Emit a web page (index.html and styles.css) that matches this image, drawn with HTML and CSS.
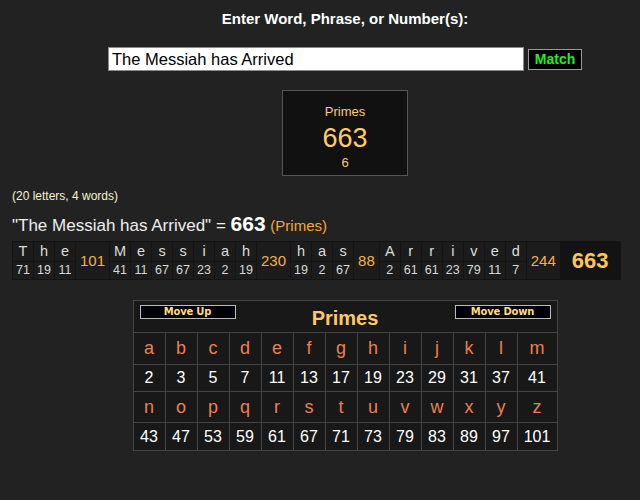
FILE: index.html
```html
<!DOCTYPE html>
<html>
<head>
<meta charset="utf-8">
<link rel="stylesheet" href="styles.css">
</head>
<body>
<div class="top">
  <div class="prompt">Enter Word, Phrase, or Number(s):</div>
  <div class="entry">
    <input class="field" type="text" value="The Messiah has Arrived">
    <button class="match">Match</button>
  </div>
  <div class="box">
    <div class="box-name">Primes</div>
    <div class="box-val">663</div>
    <div class="box-sub">6</div>
  </div>
</div>
<div class="result">
  <div class="count">(20 letters, 4 words)</div>
  <div class="phrase">"The Messiah has Arrived" = <b class="big">663</b> <span class="ciph">(Primes)</span></div>
  <table class="bd">
    <tr>
      <td class="l">T</td><td class="l">h</td><td class="l">e</td><td class="wt" rowspan="2">101</td>
      <td class="l">M</td><td class="l">e</td><td class="l">s</td><td class="l">s</td><td class="l">i</td><td class="l">a</td><td class="l">h</td><td class="wt" rowspan="2">230</td>
      <td class="l">h</td><td class="l">a</td><td class="l">s</td><td class="wt" rowspan="2">88</td>
      <td class="l">A</td><td class="l">r</td><td class="l">r</td><td class="l">i</td><td class="l">v</td><td class="l">e</td><td class="l">d</td><td class="wt" rowspan="2">244</td>
      <td class="tot" rowspan="2">663</td>
    </tr>
    <tr>
      <td class="n">71</td><td class="n">19</td><td class="n">11</td>
      <td class="n">41</td><td class="n">11</td><td class="n">67</td><td class="n">67</td><td class="n">23</td><td class="n">2</td><td class="n">19</td>
      <td class="n">19</td><td class="n">2</td><td class="n">67</td>
      <td class="n">2</td><td class="n">61</td><td class="n">61</td><td class="n">23</td><td class="n">79</td><td class="n">11</td><td class="n">7</td>
    </tr>
  </table>
</div>
<div class="chart-wrap">
  <table class="chart">
    <tr>
      <td class="head" colspan="13">
        <div class="head-row">
          <button class="mv">Move Up</button>
          <span class="ctitle">Primes</span>
          <button class="mv">Move Down</button>
        </div>
      </td>
    </tr>
    <tr class="lr">
      <td>a</td><td>b</td><td>c</td><td>d</td><td>e</td><td>f</td><td>g</td><td>h</td><td>i</td><td>j</td><td>k</td><td>l</td><td class="last">m</td>
    </tr>
    <tr class="nr">
      <td>2</td><td>3</td><td>5</td><td>7</td><td>11</td><td>13</td><td>17</td><td>19</td><td>23</td><td>29</td><td>31</td><td>37</td><td class="last">41</td>
    </tr>
    <tr class="lr lr2">
      <td>n</td><td>o</td><td>p</td><td>q</td><td>r</td><td>s</td><td>t</td><td>u</td><td>v</td><td>w</td><td>x</td><td>y</td><td class="last">z</td>
    </tr>
    <tr class="nr nr2">
      <td>43</td><td>47</td><td>53</td><td>59</td><td>61</td><td>67</td><td>71</td><td>73</td><td>79</td><td>83</td><td>89</td><td>97</td><td class="last">101</td>
    </tr>
  </table>
</div>
</body>
</html>
```

FILE: styles.css
```css
html, body {
  margin: 0;
  padding: 0;
  background: #222222;
  font-family: "Liberation Sans", Arial, sans-serif;
  color: #dddddd;
}

.top {
  margin-left: 50px;
  display: flex;
  flex-direction: column;
  align-items: center;
  padding-top: 10px;
}

.prompt {
  font-weight: bold;
  font-size: 15px;
  line-height: 18px;
  color: #ffffff;
}

.entry {
  margin-top: 19px;
  display: flex;
  align-items: center;
  gap: 4px;
}

.field {
  box-sizing: border-box;
  width: 416px;
  height: 24px;
  margin: 0;
  padding: 0 3px;
  border: 1px solid #8a8a8a;
  background: #ffffff;
  color: #000000;
  font-family: "Liberation Sans", Arial, sans-serif;
  font-size: 16.5px;
  outline: none;
}

.match {
  box-sizing: border-box;
  width: 54px;
  height: 21px;
  margin: 0;
  padding: 0;
  background: #000000;
  border: 1px solid #9a9a9a;
  color: #22ee22;
  font-family: "Liberation Sans", Arial, sans-serif;
  font-weight: bold;
  font-size: 14px;
  line-height: 19px;
}

.box {
  box-sizing: border-box;
  margin-top: 19px;
  width: 126px;
  height: 86px;
  background: #111111;
  border: 1px solid #555555;
  display: flex;
  flex-direction: column;
  align-items: center;
  padding-top: 13px;
  color: #ffcc66;
}

.box-name {
  font-size: 13px;
  line-height: 15px;
}

.box-val {
  font-size: 27px;
  line-height: 30px;
  margin-top: 4px;
}

.box-sub {
  font-size: 13px;
  line-height: 15px;
  margin-top: 2px;
}

.result {
  padding-left: 12px;
  margin-top: 13px;
}

.count {
  font-size: 12px;
  line-height: 14px;
  color: #f6f2d0;
}

.phrase {
  margin-top: 11px;
  font-size: 17px;
  line-height: 20px;
  color: #eeeeee;
}

.big {
  font-size: 21px;
  color: #ffffff;
}

.ciph {
  font-size: 15px;
  color: #f5a83a;
}

.bd {
  margin-top: 5px;
  border-collapse: separate;
  border-spacing: 1px;
  background: #141414;
}

.bd td {
  background: #1c1c1c;
  text-align: center;
  padding: 0 2px;
  min-width: 16px;
}

.bd td.l {
  font-size: 14.5px;
  line-height: 19px;
  height: 19px;
  color: #dddddd;
}

.bd td.n {
  font-size: 12.5px;
  line-height: 17px;
  height: 17px;
  color: #d8d8d8;
}

.bd td.wt {
  font-size: 15px;
  color: #f8b040;
  padding: 0 4px;
}

.bd td.tot {
  background: #131313;
  font-size: 22px;
  font-weight: bold;
  color: #ffc55a;
  padding: 0 11px;
}

.chart-wrap {
  margin-left: 50px;
  margin-top: 20px;
  display: flex;
  justify-content: center;
}

.chart {
  border-collapse: collapse;
  background: #181818;
  border: 1px solid #444444;
}

.chart td {
  border: 1px solid #444444;
  text-align: center;
  padding: 0;
  width: 31px;
}

.chart td.last {
  width: 39px;
}

.chart td.head {
  height: 31px;
  vertical-align: top;
  width: auto;
}

.head-row {
  display: flex;
  justify-content: space-between;
  align-items: flex-start;
  padding: 4px 6px 0 6px;
}

.mv {
  box-sizing: border-box;
  width: 96px;
  height: 14px;
  margin: 0;
  padding: 0;
  background: #000008;
  border: 1px solid #bbbbbb;
  color: #ffdd77;
  font-family: "DejaVu Sans", Verdana, sans-serif;
  font-weight: bold;
  font-size: 10px;
  line-height: 12px;
  letter-spacing: -0.2px;
}

.ctitle {
  font-size: 20px;
  font-weight: bold;
  color: #ffc866;
  line-height: 24px;
  margin-top: 1px;
}

.lr td {
  height: 31px;
  font-size: 18px;
  color: #ea8050;
}

.lr2 td {
  height: 30px;
}

.nr td {
  height: 26px;
  font-size: 16px;
  color: #ffffff;
}

.nr2 td {
  height: 27px;
}
```
